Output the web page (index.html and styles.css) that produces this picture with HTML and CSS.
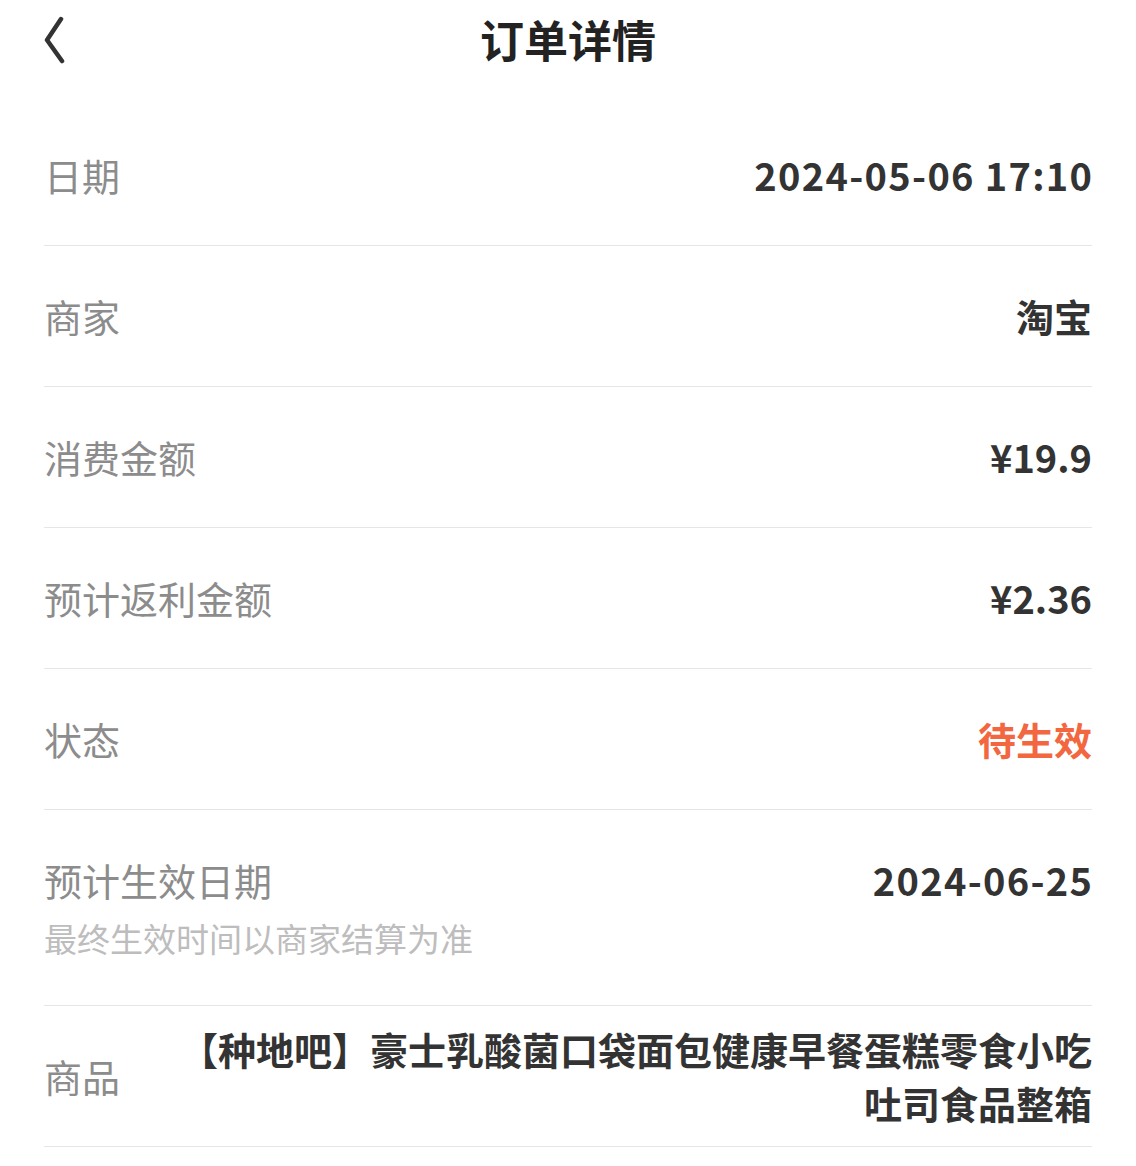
FILE: index.html
```html
<!DOCTYPE html>
<html lang="zh-CN">
<head>
  <meta charset="UTF-8">
  <meta name="viewport" content="width=device-width, initial-scale=1.0">
  <title>订单详情</title>
  <link rel="stylesheet" href="styles.css">
</head>
<body>
  <div class="header">
    <a class="back" href="#">
      <svg width="24" height="48" viewBox="0 0 24 48">
        <path d="M17 3 L3 24 L18 45" fill="none" stroke="#333" stroke-width="4.5" stroke-linecap="round" stroke-linejoin="round"/>
      </svg>
    </a>
    <h1>订单详情</h1>
  </div>

  <div class="detail-list">
    <div class="row">
      <div class="label">日期</div>
      <div class="value num">2024-05-06 17:10</div>
    </div>
    <div class="row">
      <div class="label">商家</div>
      <div class="value">淘宝</div>
    </div>
    <div class="row">
      <div class="label">消费金额</div>
      <div class="value">¥19.9</div>
    </div>
    <div class="row">
      <div class="label">预计返利金额</div>
      <div class="value">¥2.36</div>
    </div>
    <div class="row">
      <div class="label">状态</div>
      <div class="value status">待生效</div>
    </div>
    <div class="row row-top">
      <div class="label-group">
        <div class="label">预计生效日期</div>
        <div class="hint">最终生效时间以商家结算为准</div>
      </div>
      <div class="value num">2024-06-25</div>
    </div>
    <div class="row row-product">
      <div class="label">商品</div>
      <div class="value product">【种地吧】豪士乳酸菌口袋面包健康早餐蛋糕零食小吃吐司食品整箱</div>
    </div>
  </div>
</body>
</html>
```

FILE: styles.css
```css
body {
  margin: 0;
  background-color: #fff;
  font-family: "Noto Sans CJK SC", "Noto Sans", sans-serif;
  color: #333;
}

.header {
  position: relative;
  height: 84px;
  display: flex;
  align-items: center;
  justify-content: center;
}

.back {
  position: absolute;
  left: 44px;
  top: 16px;
  display: block;
  height: 48px;
}

.header h1 {
  margin: -6px 0 0 0;
  font-size: 44px;
  font-weight: bold;
  color: #222;
  line-height: 84px;
}

.detail-list {
  margin: 21px 44px 0 44px;
}

.row {
  display: flex;
  justify-content: space-between;
  align-items: center;
  min-height: 54px;
  padding: 43px 0;
  border-bottom: 1px solid #e6e6e6;
}

.label {
  font-size: 38px;
  line-height: 54px;
  color: #8c8c8c;
  white-space: nowrap;
}

.value {
  font-size: 38px;
  line-height: 54px;
  font-weight: bold;
  color: #333;
  text-align: right;
}

.num {
  letter-spacing: 1.3px;
  margin-right: -1.3px;
}

.status {
  color: #f2673f;
}

.row-top {
  align-items: flex-start;
  padding-bottom: 44px;
}

.hint {
  margin-top: 8px;
  font-size: 33px;
  line-height: 46px;
  color: #bdbdbd;
}

.row-product {
  padding: 16px 0;
  min-height: 108px;
}

.product {
  width: 930px;
}
```
